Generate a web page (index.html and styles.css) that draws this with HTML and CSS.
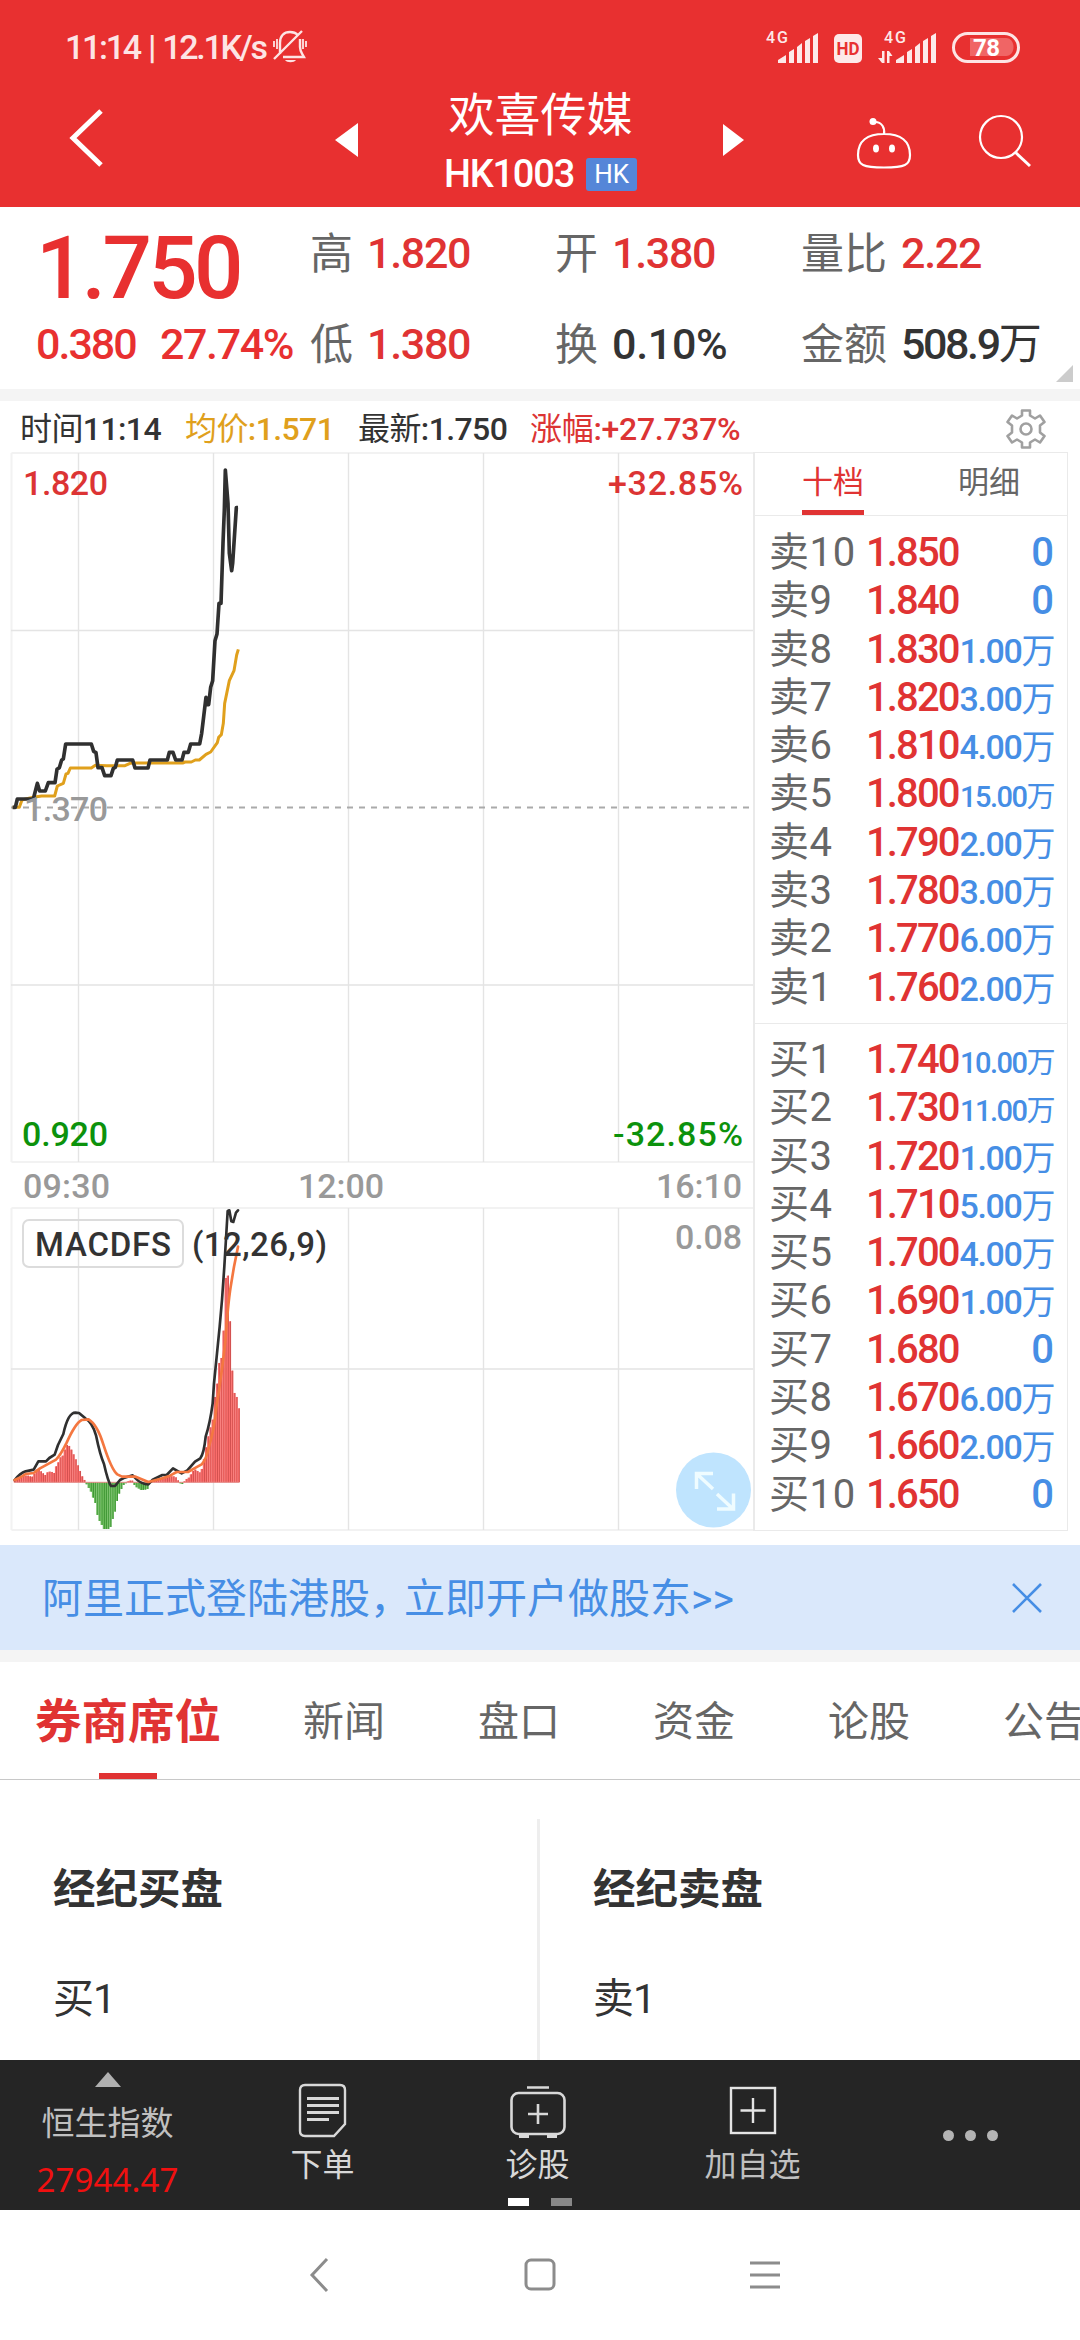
FILE: index.html
```html
<!DOCTYPE html>
<html lang="zh-CN">
<head>
  <meta charset="UTF-8" />
  <meta name="viewport" content="width=device-width, initial-scale=1.0"/>
  <title>欢喜传媒 HK1003</title>
  <link rel="stylesheet" href="styles.css">
</head>
<body>

<header class="header">
  <div class="status">
    <span class="status-time">11:14 | 12.1K/s</span>
    <svg class="bell" width="36" height="36" viewBox="0 0 36 36" fill="none" stroke="#fde4e4" stroke-width="2.4">
      <path d="M8 25V14C8 7 12 3 18 3c4 0 6 1 8 3M28 10v8c0 5 2 6 4 10H11M2 30L30 2"/>
      <path d="M2 12v6M5 10v10M31 10v10M34 12v6" stroke-width="1.8"/>
      <path d="M13 31h11c-2 3-9 3-11 0z" fill="#fde4e4" stroke="none"/>
    </svg>
    <svg class="signals" width="260" height="36" viewBox="764 29 260 36" fill="#fde9e9">
      <text class="net" x="766" y="43" textLength="22">4G</text>
      <path d="M778 63v-3l8-5v8zM789 63V52l5-3v14zM797 63V47l5-4v20zM805 63V41l5-3v25zM813 63V36l5-3v30z"/>
      <rect x="834" y="34" width="28" height="29" rx="5"/>
      <text class="hd" x="836.500" y="55" textLength="23" lengthAdjust="spacingAndGlyphs">HD</text>
      <text class="net" x="884" y="43" textLength="22">4G</text>
      <path d="M882 51h2.500v12h-2.500l-4-5h4zM887 63V51h2l3.500 5h-3v7z"/>
      <path d="M896 63v-3l8-5v8zM907 63V52l5-3v14zM915 63V47l5-4v20zM923 63V41l5-3v25zM931 63V36l5-3v30z"/>
      <rect x="953.500" y="33.500" width="65" height="28" rx="14" fill="none" stroke="#fde4e4" stroke-width="3"/>
      <path d="M970 38h36c10 0 10 18 0 18h-36z" fill="#f06565"/>
      <text class="battery" x="973" y="56" textLength="27">78</text>
    </svg>
  </div>
  <div class="title-bar">
    <svg class="back" width="40" height="64" viewBox="0 0 40 64" fill="none" stroke="#fff" stroke-width="5"><path d="M34 5L6 32l28 27"/></svg>
    <svg class="prev" width="24" height="36" viewBox="0 0 24 36" fill="#fff"><path d="M0 18L23 1v34z"/></svg>
    <div class="title">
      <div class="name">欢喜传媒</div>
      <div class="code">HK1003<span class="market">HK</span></div>
    </div>
    <svg class="next" width="24" height="36" viewBox="0 0 24 36" fill="#fff"><path d="M22 18L1 2v32z"/></svg>
    <svg class="robot" width="60" height="56" viewBox="0 0 60 56" fill="none" stroke="#fff" stroke-width="2.2">
      <path d="M30 20C13 20 4 27 4 41c0 10 5 12.500 26 12.500s26-2.500 26-12.500c0-14-9-21-26-21zM21 8c7 0 10 6 9 12"/>
      <circle cx="19" cy="7.500" r="3.500" fill="#fff" stroke="none"/>
      <ellipse cx="22" cy="34.500" rx="3" ry="4" fill="#fff" stroke="none"/>
      <ellipse cx="38" cy="34.500" rx="3" ry="4" fill="#fff" stroke="none"/>
    </svg>
    <svg class="search" width="56" height="56" viewBox="0 0 56 56" fill="none" stroke="#fff" stroke-width="2.2"><circle cx="24" cy="24" r="21"/><path d="M38 39l15 14" stroke-width="3"/></svg>
  </div>
</header>

<section class="quote">
  <div class="last">
    <div class="last-price">1.750</div>
    <div class="change"><span>0.380</span><span>27.74%</span></div>
  </div>
  <dl class="stats">
    <div><dt>高</dt><dd class="up">1.820</dd></div>
    <div><dt>开</dt><dd class="up">1.380</dd></div>
    <div><dt>量比</dt><dd class="up">2.22</dd></div>
    <div><dt>低</dt><dd class="up">1.380</dd></div>
    <div><dt>换</dt><dd class="turnover">0.10%</dd></div>
    <div><dt>金额</dt><dd class="amount">508.9<span class="unit">万</span></dd></div>
  </dl>
  <span class="corner"></span>
</section>

<div class="info">
  <span class="info-time">时间<b>11:14</b></span>
  <span class="info-avg">均价<b>:1.571</b></span>
  <span class="info-last">最新<b>:1.750</b></span>
  <span class="info-rate">涨幅<b>:+27.737%</b></span>
  <svg class="gear" width="42" height="42" viewBox="0 0 42 42" fill="none" stroke="#a0a0a0" stroke-width="2.6">
    <path d="M17 2.500h8v5l5 3 5-3 4.500 6.500-4.500 3.500v7l4.500 3.500-4.500 6.500-5-3-5 3v5h-8v-5l-5-3-5 3L2.500 28 7 24.500v-7L2.500 14 7 7.500l5 3 5-3z" stroke-linejoin="round"/>
    <circle cx="21" cy="21" r="5.500"/>
  </svg>
</div>

<main class="market-row">
  <svg class="chart" width="753" height="1080" viewBox="0 452 753 1080">
    <g class="frame">
      <path d="M11.500 453H753M11.500 1162H753M11.500 1208H753M11.500 1530H753M11.500 453V1162M11.500 1208V1530"/>
    </g>
    <g class="grid">
      <path d="M78.500 453V1162M213.500 453V1162M348.500 453V1162M483.500 453V1162M618.500 453V1162M78.500 1208V1530M213.500 1208V1530M348.500 1208V1530M483.500 1208V1530M618.500 1208V1530"/>
      <path d="M11 630.500H753M11 985H753M11 1369H753"/>
    </g>
    <path d="M11 807.500H753" stroke="#aaa" stroke-width="2" stroke-dasharray="6 6"/>

    <!-- price and average lines -->
    <g transform="translate(0 440) scale(.33333)" fill="none" stroke-linejoin="round">
      <path stroke="#e0a01c" stroke-width="9" d="M38 1102H58L66 1080 80 1076 100 1072 125 1068H164L172 1038 190 1030 198 1002 204 1000 211 984H274L286 976 320 977H375L390 970 402 969H548L555 966H574L586 960H598L618 943 632 936 652 908 656 892 664 884 670 850 674 790 688 722 702 692 710 645 715 628"/>
      <path stroke="#303030" stroke-width="11" d="M38 1102H46L52 1077H100L112 1030 119 1053H136L145 1028H165L171 988 178 983 185 960 190 957 197 912H274L281 934 288 938 294 983H306L314 1007H333L340 985 346 982 352 960H398L405 984H444L450 960H502L508 937H519L527 960H546L552 937H565L572 912H599L605 880 611 830 618 772 621 794H626L632 742 638 722 645 602 651 582 657 490H663L669 310 673 210 676 90 684 190 688 340 695 392 698 370 709 203H714"/>
    </g>

    <g class="label">
      <text x="24" y="821" textLength="84">1.370</text>
      <text x="23" y="1198" textLength="87">09:30</text>
      <text x="298" y="1198" textLength="86">12:00</text>
      <text x="656" y="1198" textLength="86">16:10</text>
      <text x="675" y="1249" textLength="67">0.08</text>
    </g>
    <g class="label label-up">
      <text x="23" y="495" textLength="85">1.820</text>
      <text x="608" y="495" textLength="135">+32.85%</text>
    </g>
    <g class="label label-down">
      <text x="22" y="1146" textLength="86">0.920</text>
      <text x="613" y="1146" textLength="130">-32.85%</text>
    </g>

    <!-- MACD -->
    <g id="macdBars"></g>
    <g transform="translate(0 1120) scale(.33333)" fill="none" stroke-linejoin="round" stroke-linecap="round">
      <path stroke="#303030" stroke-width="8" d="M44 1080Q60 1060 77 1054L101 1049 115 1024H138L148 1014 164 1004 174 975 190 942Q204 878 226 878L237 879 256 895Q277 907 288 946 300 1005 312 1032 324 1085 333 1098H345L360 1080 374 1073 398 1066 410 1078Q424 1092 445 1093L458 1079 487 1065H500L519 1045 545 1060 562 1051 585 1025 601 1015Q612 1000 617 950 630 910 638 850L642 790 651 700 659 620 666 540 673 440 683 273 688 271 694 304 700 306 708 278 714 271"/>
      <path stroke="#f47740" stroke-width="8" d="M44 1080Q60 1074 77 1062L101 1059 120 1045 168 1019Q182 1005 200 968 226 910 245 900L266 898Q292 914 310 973 335 1050 352 1063L366 1070H385L407 1070 445 1086 480 1077 510 1067 530 1056H564L587 1043 605 1033Q619 1018 627 980 643 930 650 855 664 770 676 665 684 550 692 500L702 440 714 380"/>
    </g>
    <rect x="23" y="1220" width="160" height="47" rx="6" fill="none" stroke="#dcdcdc" stroke-width="2"/>
    <g class="label label-dark">
      <text x="35" y="1256" textLength="136">MACDFS</text>
      <text x="192" y="1256" textLength="135">(12,26,9)</text>
    </g>
    <circle cx="713.500" cy="1490" r="37.500" fill="#bfe4fe"/>
    <path d="M696.500 1489v-15.500h16.500M697 1474l16 15M717 1509h16.500v-15.500M733 1509l-16-15" fill="none" stroke="#effcff" stroke-width="3.5"/>
  </svg>

  <aside class="book">
    <div class="book-tabs"><span class="active">十档</span><span>明细</span></div>
    <div class="book-list" id="asks"></div>
    <div class="book-list bids" id="bids"></div>
  </aside>
</main>

<div class="banner">
  <span>阿里正式登陆港股<span class="comma">，</span>立即开户做股东&gt;&gt;</span>
  <svg width="30" height="30" viewBox="0 0 30 30" fill="none" stroke="#468ee5" stroke-width="2.6"><path d="M1 1l28 28M29 1L1 29"/></svg>
</div>

<nav class="tabs">
  <span class="active">券商席位</span>
  <span>新闻</span>
  <span>盘口</span>
  <span>资金</span>
  <span>论股</span>
  <span>公告</span>
</nav>

<section class="brokers">
  <div><h3>经纪买盘</h3><p>买1</p></div>
  <div><h3>经纪卖盘</h3><p>卖1</p></div>
</section>

<footer class="toolbar">
  <div class="index">
    <span class="arrow"></span>
    <span class="index-name">恒生指数</span>
    <span class="index-value">27944.47</span>
  </div>
  <div class="tool">
    <svg width="60" height="60" viewBox="0 0 60 60" fill="none" stroke="#d8d8d8" stroke-width="2.4"><path d="M12 5h35q5 0 5 5v34L41 56H12q-5 0-5-5V10q0-5 5-5z"/><path d="M14 18.500h32M14 25.500h32M14 32.500h32M14 39.500h22" stroke-width="3"/></svg>
    <span>下单</span>
  </div>
  <div class="tool">
    <svg width="60" height="60" viewBox="0 0 60 60" fill="none" stroke="#d8d8d8" stroke-width="2.6"><rect x="3.500" y="13" width="53" height="41" rx="7"/><path d="M19 7.500h22M30 24v20M20 34h20"/><path d="M11 56h10M39 56h10" stroke-width="4"/></svg>
    <span>诊股</span>
    <i class="pager"></i>
  </div>
  <div class="tool dim">
    <svg width="60" height="60" viewBox="0 0 60 60" fill="none" stroke="#e4e4e4" stroke-width="2.4"><rect x="8" y="8" width="44" height="45"/><path d="M30 18v25M17.500 30.500h25"/></svg>
    <span>加自选</span>
  </div>
  <div class="more"><i></i><i></i><i></i></div>
</footer>

<div class="sysnav">
  <svg width="1080" height="40" viewBox="0 0 1080 40" fill="none" stroke="#8c8c8c" stroke-width="3"><path d="M327 4l-15 16 15 16"/><rect x="526" y="5" width="28" height="29" rx="5"/><path d="M750 8h30M750 20h30M750 32h30"/></svg>
</div>

<script>
  const asks = [
    ['卖10', '1.850', '0'], ['卖9', '1.840', '0'], ['卖8', '1.830', '1.00万'],
    ['卖7', '1.820', '3.00万'], ['卖6', '1.810', '4.00万'], ['卖5', '1.800', '15.00万'],
    ['卖4', '1.790', '2.00万'], ['卖3', '1.780', '3.00万'], ['卖2', '1.770', '6.00万'],
    ['卖1', '1.760', '2.00万']
  ];
  const bids = [
    ['买1', '1.740', '10.00万'], ['买2', '1.730', '11.00万'], ['买3', '1.720', '1.00万'],
    ['买4', '1.710', '5.00万'], ['买5', '1.700', '4.00万'], ['买6', '1.690', '1.00万'],
    ['买7', '1.680', '0'], ['买8', '1.670', '6.00万'], ['买9', '1.660', '2.00万'],
    ['买10', '1.650', '0']
  ];

  function renderBook(id, rows) {
    document.getElementById(id).innerHTML = rows.map(([label, price, volume]) => {
      const size = volume.length > 5 ? 'small' : volume.length > 1 ? 'medium' : '';
      return `<div class="book-row">
        <span class="level">${label}</span>
        <span class="price">${price}</span>
        <span class="volume ${size}">${volume.replace('万', '<span class="unit">万</span>')}</span>
      </div>`;
    }).join('');
  }

  renderBook('asks', asks);
  renderBook('bids', bids);

  // histogram values, a third of a pixel per unit
  const macd = [
    5, 8, 12, 17, 20, 20, 20, 18, 17, 25, 38, 40, 33, 27, 22, 30, 32, 31, 28, 48, 60, 75, 80, 98,
    112, 109, 98, 84, 69, 51, 34, 18, 7, -6, -17, -28, -46, -62, -98, -116, -128, -140, -140, -140,
    -134, -110, -88, -56, -34, -20, -8, -3, 3, 5, 5, -8, -15, -19, -23, -23, -22, -20, 1, 5, 8, 9,
    10, 12, 14, 15, 16, 17, 18, 18, 15, 6, -3, -5, 3, 10, 14, 24, 34, 38, 34, 30, 40, 70, 105, 138,
    165, 188, 256, 296, 358, 373, 455, 613, 620, 483, 335, 268, 256, 222
  ];
  const zero = 1482.3;
  const step = (238.6 - 14.6) / (macd.length - 1);

  document.getElementById('macdBars').innerHTML = macd.map((v, i) => {
    const h = Math.abs(v) / 3;
    const x = 13.6 + i * step;
    const y = v > 0 ? zero - h : zero;
    const [light, dark] = v > 0 ? ['#fb6d6b', '#cf4f4d'] : ['#6cbb5c', '#3c9433'];
    return `<rect x="${x}" y="${y}" width="2.2" height="${h}" fill="${light}"/>` +
      `<rect x="${x + 1.2}" y="${y}" width="0.9" height="${h}" fill="${dark}"/>`;
  }).join('') + `<path d="M14 ${zero}H239" stroke="#e58a88"/>`;
</script>

</body>
</html>
```

FILE: styles.css
```css
* { box-sizing: border-box; }

body {
  font-family: Roboto, "Noto Sans CJK SC", sans-serif;
  margin: 0;
  width: 1080px;
  height: 2340px;
  overflow: hidden;
  background: #fff;
  color: #333;
}

svg {
  display: block;
  flex: none;
}

/* header */
.header {
  height: 207px;
  background: #e83030;
  color: #fff;
}

.status {
  display: flex;
  height: 94px;
  padding: 29px 56px 0 65px;
}

.status-time {
  width: 207px;
  font-size: 34px;
  font-weight: 500;
  line-height: 37px;
  letter-spacing: -2.3px;
  word-spacing: 2px;
  white-space: nowrap;
  color: #fde4e4;
}

.signals { margin-left: auto; }
.net { font-size: 16px; font-weight: 500; }
.hd { font-size: 19px; font-weight: 700; fill: #e83030; }
.battery { font-size: 24px; font-weight: 700; fill: #fff; }

.title-bar {
  display: flex;
  align-items: flex-start;
  padding-left: 67px;
}

.back { margin-top: 12px; }
.prev { margin: 28px 0 0 228px; }

.title {
  width: 363px;
  text-align: center;
}

.name {
  font-size: 46px;
  line-height: 42px;
}

.code {
  display: flex;
  justify-content: center;
  align-items: center;
  height: 38px;
  margin-top: 19px;
  font-size: 38px;
  font-weight: 500;
  letter-spacing: -1.2px;
}

.market {
  width: 51px;
  height: 33px;
  margin-left: 12px;
  border-radius: 3px;
  background: #5586d8;
  font-size: 26px;
  font-weight: 400;
  line-height: 33px;
  letter-spacing: 0;
}

.next { margin-top: 28px; }
.robot { margin: 20px 0 0 108px; }
.search { margin: 19px 0 0 63px; }

/* quote */
.quote {
  display: flex;
  position: relative;
  height: 194px;
  border-bottom: 12px solid #f4f4f4;
}

.last {
  width: 310px;
  padding: 21px 0 0 36px;
  color: #e83030;
}

.last-price {
  font-size: 87px;
  font-weight: 500;
  line-height: 80px;
  letter-spacing: -3.6px;
}

.change {
  display: flex;
  justify-content: space-between;
  margin-top: 13px;
  padding-right: 17px;
  font-size: 43px;
  font-weight: 500;
  line-height: 46px;
  letter-spacing: -2px;
}

.change span:last-child { letter-spacing: -1.4px; }

.stats {
  display: grid;
  grid-template-columns: 245px 246px 1fr;
  grid-auto-rows: 91px;
  flex: 1;
  margin: 0;
}

.stats div {
  display: flex;
  align-items: center;
  height: 91px;
}

.stats dt {
  margin-top: -6px;
  font-size: 43px;
  color: #666;
}

.stats dd {
  margin: 0 0 0 14px;
  font-size: 43px;
  font-weight: 500;
  letter-spacing: -1.3px;
  white-space: nowrap;
}

.stats .turnover { letter-spacing: -0.3px; }
.stats .amount { letter-spacing: -2.4px; line-height: 50px; }
.unit { font-weight: 400; }
.up { color: #e03333; }

.corner {
  position: absolute;
  right: 7px;
  bottom: 7px;
  border-left: 17px solid transparent;
  border-bottom: 17px solid #ccc;
}

/* info line */
.info {
  display: flex;
  align-items: center;
  height: 51px;
  padding: 5px 33px 0 20px;
  font-size: 32px;
  line-height: 46px;
  letter-spacing: -0.6px;
  white-space: nowrap;
}

.info b { font-weight: 500; }
.info-time { width: 165px; }
.info-avg { width: 173px; color: #e0a01c; }
.info-last { width: 172px; }
.info-rate { color: #dc3434; letter-spacing: -0.3px; }
.gear { margin-left: auto; }

/* chart and order book */
.market-row {
  display: flex;
  height: 1093px;
}

.frame { stroke: #f2f2f2; stroke-width: 2; }
.grid { stroke: #e4e4e4; stroke-width: 1.4; }
.label { font-size: 34px; font-weight: 500; fill: #999; }
.label-up { fill: #dc3434; }
.label-down { fill: #0c920c; }
.label-dark { font-size: 33px; fill: #333; }

.book {
  width: 315px;
  height: 1079px;
  border: 1px solid #eaeaea;
  border-left-width: 2px;
}

.book-tabs {
  display: flex;
  justify-content: space-between;
  height: 63px;
  padding: 0 47px;
  border-bottom: 1px solid #eaeaea;
  font-size: 31px;
  line-height: 60px;
  color: #666;
}

.book-tabs .active {
  height: 62px;
  border-bottom: 5px solid #e03333;
  color: #e03333;
}

.book-list {
  height: 507px;
  padding: 13px 13px 0 14px;
}

.book-row {
  display: flex;
  height: 48.3px;
  font-size: 40px;
  line-height: 48.3px;
  white-space: nowrap;
}

.bids {
  border-top: 1px solid #eaeaea;
  padding-top: 12px;
}

.level {
  width: 97px;
  letter-spacing: 0.6px;
  color: #666;
}

.price {
  width: 92px;
  font-weight: 500;
  letter-spacing: -1.9px;
  color: #e03333;
}

.volume {
  margin-left: auto;
  font-weight: 500;
  color: #468ee5;
}

.volume.medium { font-size: 34px; letter-spacing: -1.4px; line-height: 51px; }
.volume.small { font-size: 29px; letter-spacing: -1.5px; line-height: 54px; }

/* banner */
.banner {
  display: flex;
  justify-content: space-between;
  align-items: center;
  height: 117px;
  padding: 0 38px 0 42px;
  border-bottom: 12px solid #f4f4f4;
  background: #dae8fb;
  font-size: 41px;
  line-height: 56px;
  color: #468ee5;
}

.banner > span { margin-top: 2px; }
.comma { letter-spacing: -7px; }

/* news tabs */
.tabs {
  display: flex;
  height: 118px;
  overflow: hidden;
  padding-left: 35px;
  border-bottom: 1px solid #c8c8c8;
  font-size: 41px;
  line-height: 120px;
  white-space: nowrap;
  color: #666;
}

.tabs span {
  flex: none;
  width: 175px;
}

.tabs .active {
  display: flex;
  flex-direction: column;
  width: 268px;
  font-size: 46.5px;
  font-weight: 700;
  color: #e03333;
}

.tabs .active::after {
  content: "";
  width: 58px;
  height: 6px;
  margin: -9px 0 0 64px;
  background: #e03333;
}

/* brokers */
.brokers {
  display: flex;
  height: 280px;
  padding-top: 39px;
}

.brokers div {
  width: 541px;
  padding: 46px 0 0 53px;
}

.brokers div:first-child { border-right: 3px solid #eee; }

.brokers h3 {
  margin: 0;
  font-size: 42.5px;
  font-weight: 700;
  line-height: 50px;
}

.brokers p {
  margin: 59px 0 0;
  font-size: 41px;
  line-height: 50px;
  letter-spacing: -1px;
}

/* bottom toolbar */
.toolbar {
  display: grid;
  grid-template-columns: repeat(5, 215px);
  height: 150px;
  background: #252525;
  color: #d8d8d8;
}

.index, .tool {
  display: flex;
  flex-direction: column;
  align-items: center;
  font-size: 32px;
}

.arrow {
  margin-top: 12px;
  border: 13px solid transparent;
  border-top: 0;
  border-bottom: 15px solid #b0b0b0;
}

.index-name {
  margin-top: 17px;
  font-size: 33px;
  line-height: 40px;
  color: #c0c0c0;
}

.index-value {
  margin-top: 16px;
  font-family: "Noto Sans", sans-serif;
  font-size: 33px;
  line-height: 40px;
  letter-spacing: 0.1px;
  color: #f01010;
}

.tool svg { margin-top: 20px; }

.tool span {
  margin-top: 5px;
  line-height: 40px;
}

.dim span { color: #c0c0c0; }

.pager {
  width: 21px;
  height: 8px;
  margin: 13px 0 0 -38px;
  background: #fff;
  box-shadow: 43px 0 #888;
}

.more {
  display: flex;
  justify-content: center;
  align-items: center;
  gap: 11px;
  padding-left: 5px;
}

.more i {
  width: 11px;
  height: 11px;
  border-radius: 50%;
  background: #b4b4b4;
}

/* system navigation */
.sysnav {
  height: 130px;
  padding-top: 45px;
}
```
